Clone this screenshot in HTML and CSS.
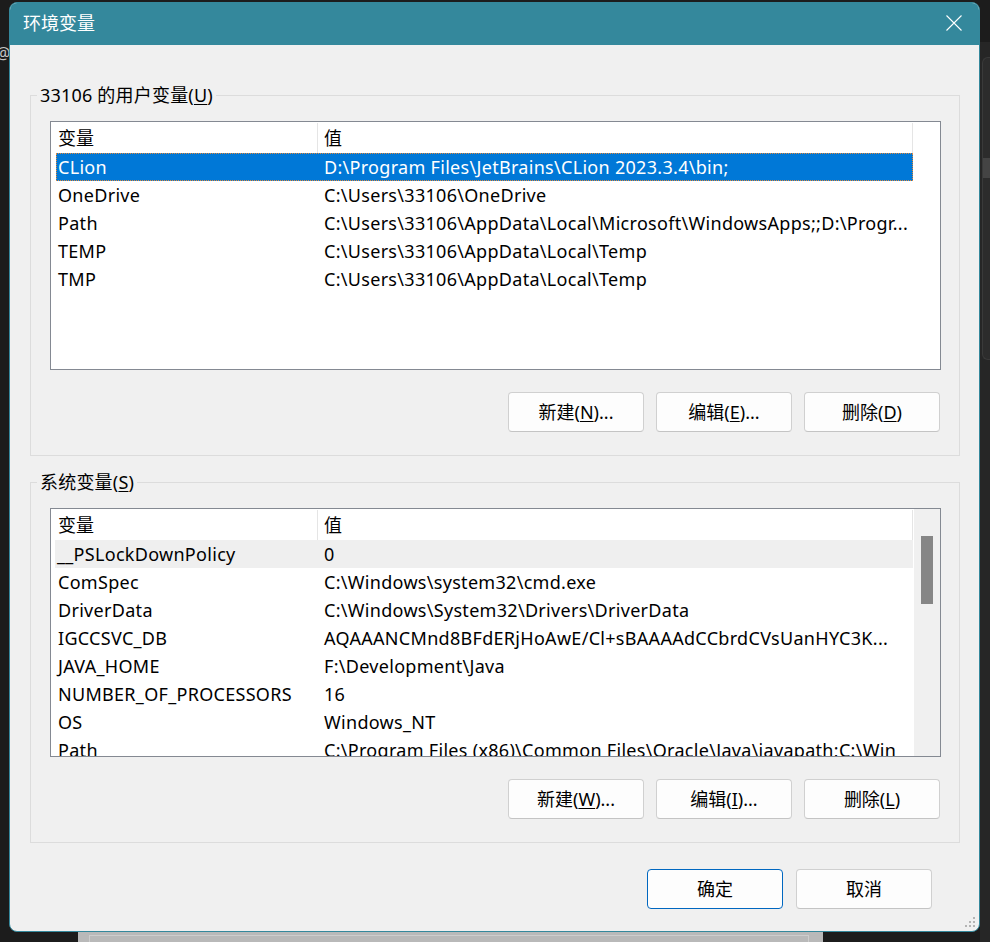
FILE: index.html
```html
<!DOCTYPE html>
<html lang="zh-CN">

<head>
    <meta charset="UTF-8">
    <meta name="viewport" content="width=device-width, initial-scale=1.0">
    <title>环境变量</title>
    <link rel="stylesheet" href="styles.css">
</head>

<body>
    <div class="desk">
        <!-- 后面的窗口 -->
        <div class="back_win">
            <div class="back_panel"></div>
        </div>
        <span class="desk_at">@</span>
        <div class="desk_side">
            <div class="side_panel">
                <div class="side_block"></div>
            </div>
        </div>

        <!-- 环境变量对话框 -->
        <div class="dialog">
            <div class="title_bar">
                <span class="title">环境变量</span>
                <svg class="btn_close" width="16" height="16" viewBox="0 0 16 16">
                    <path d="M0.5 0.5L15.5 15.5M15.5 0.5L0.5 15.5" stroke="#ffffff" stroke-width="1.1" fill="none" />
                </svg>
            </div>

            <div class="dialog_body">
                <!-- 用户变量 -->
                <fieldset class="group">
                    <legend>33106 的用户变量(<u>U</u>)</legend>
                    <div class="group_body">
                        <div class="list">
                            <div class="list_main">
                                <div class="list_head"><span>变量</span><span>值</span></div>
                                <div class="row selected"><span>CLion</span><span>D:\Program Files\JetBrains\CLion 2023.3.4\bin;</span></div>
                                <div class="row"><span>OneDrive</span><span>C:\Users\33106\OneDrive</span></div>
                                <div class="row"><span>Path</span><span>C:\Users\33106\AppData\Local\Microsoft\WindowsApps;;D:\Progr...</span></div>
                                <div class="row"><span>TEMP</span><span>C:\Users\33106\AppData\Local\Temp</span></div>
                                <div class="row"><span>TMP</span><span>C:\Users\33106\AppData\Local\Temp</span></div>
                            </div>
                        </div>
                        <div class="btn_row">
                            <span class="btn">新建(<u>N</u>)...</span>
                            <span class="btn">编辑(<u>E</u>)...</span>
                            <span class="btn">删除(<u>D</u>)</span>
                        </div>
                    </div>
                </fieldset>

                <!-- 系统变量 -->
                <fieldset class="group group_sys">
                    <legend>系统变量(<u>S</u>)</legend>
                    <div class="group_body">
                        <div class="list">
                            <div class="list_main">
                                <div class="list_head"><span>变量</span><span>值</span></div>
                                <div class="row hover"><span>__PSLockDownPolicy</span><span>0</span></div>
                                <div class="row"><span>ComSpec</span><span>C:\Windows\system32\cmd.exe</span></div>
                                <div class="row"><span>DriverData</span><span>C:\Windows\System32\Drivers\DriverData</span></div>
                                <div class="row"><span>IGCCSVC_DB</span><span>AQAAANCMnd8BFdERjHoAwE/Cl+sBAAAAdCCbrdCVsUanHYC3K...</span></div>
                                <div class="row"><span>JAVA_HOME</span><span>F:\Development\Java</span></div>
                                <div class="row"><span>NUMBER_OF_PROCESSORS</span><span>16</span></div>
                                <div class="row"><span>OS</span><span>Windows_NT</span></div>
                                <div class="row"><span>Path</span><span>C:\Program Files (x86)\Common Files\Oracle\Java\javapath;C:\Win</span></div>
                            </div>
                            <!-- 滚动条 -->
                            <div class="scroll">
                                <div class="scroll_thumb"></div>
                            </div>
                        </div>
                        <div class="btn_row">
                            <span class="btn">新建(<u>W</u>)...</span>
                            <span class="btn">编辑(<u>I</u>)...</span>
                            <span class="btn">删除(<u>L</u>)</span>
                        </div>
                    </div>
                </fieldset>

                <div class="dialog_foot">
                    <span class="btn btn_default">确定</span>
                    <span class="btn">取消</span>
                </div>
            </div>

            <!-- 右下角拖动点 -->
            <svg class="grip" width="12" height="12" viewBox="0 0 12 12">
                <g fill="#b4b4b4">
                    <rect x="9" y="0" width="2" height="2" />
                    <rect x="5" y="4" width="2" height="2" />
                    <rect x="9" y="4" width="2" height="2" />
                    <rect x="1" y="8" width="2" height="2" />
                    <rect x="5" y="8" width="2" height="2" />
                    <rect x="9" y="8" width="2" height="2" />
                </g>
            </svg>
        </div>
    </div>
</body>

</html>
```

FILE: styles.css
```css
/* 初始化 */

* {
    margin: 0;
    padding: 0;
    box-sizing: border-box;
}

body {
    background: #1c1c1c;
    font-family: "Noto Sans", "Noto Sans CJK SC", sans-serif;
    font-size: 18px;
    color: #000;
}

u {
    text-decoration-thickness: 1px;
    text-underline-offset: 2px;
}

.desk {
    width: 990px;
    height: 942px;
    position: relative;
    overflow: hidden;
    padding: 2px 0 0 9px;
}

/* 背景里的东西 */
.back_win {
    position: absolute;
    left: 78px;
    top: 932px;
    width: 745px;
    height: 20px;
    background: #b9b9b9;
}

.back_win .back_panel {
    position: absolute;
    left: 11px;
    right: 14px;
    top: 3px;
    height: 20px;
    border: 1px solid #cdcdcd;
}

.desk_at {
    position: absolute;
    left: -4px;
    top: 42px;
    color: #c4c4c4;
    font-size: 16px;
}

.desk_side {
    position: absolute;
    right: 0;
    top: 42px;
    width: 10px;
    height: 900px;
    background: #262626;
    padding: 15px 0 0 2px;
}

.desk_side .side_panel {
    height: 303px;
    background: #2c2c2c;
    border: 1px solid #3a3a3a;
    border-right: none;
    border-radius: 6px 0 0 6px;
    padding-top: 100px;
}

.desk_side .side_block {
    height: 20px;
    background: #444;
}

/* 对话框 */
.dialog {
    width: 971px;
    height: 930px;
    border: 1px solid #34889c;
    border-radius: 8px;
    background: #f0f0f0;
    position: relative;
    overflow: hidden;
}

.title_bar {
    height: 42px;
    background: #34889c;
    display: flex;
    align-items: center;
    justify-content: space-between;
    padding: 0 17px 2px 13px;
}

.title_bar .title {
    color: #fff;
    font-size: 18px;
    line-height: 24px;
}

.dialog_body {
    padding: 38px 20px 0 20px;
}

.group {
    width: 930px;
    border: 1px solid #dcdcdc;
    min-width: 0;
}

.group legend {
    margin-left: 6px;
    padding: 0 3px;
    line-height: 24px;
    letter-spacing: 0.2px;
}

.group_sys {
    margin-top: 14px;
}

.group_body {
    padding: 14px 18px 23px 19px;
}

/* 列表 */
.list {
    width: 891px;
    height: 249px;
    border: 1px solid #848992;
    background: #fff;
    display: flex;
    overflow: hidden;
}

.list_main {
    width: 862px;
    flex: none;
}

.list_head {
    height: 31px;
    display: grid;
    grid-template-columns: 267px 595px;
    line-height: 30px;
}

.list_head span {
    padding-left: 7px;
    border-right: 1px solid #e5e5e5;
    margin: 1px 0 1px;
}

.list_head span + span {
    padding-left: 6px;
}

.row {
    height: 28px;
    margin-left: 5px;
    display: grid;
    grid-template-columns: 261px 596px;
    line-height: 28px;
    white-space: nowrap;
    letter-spacing: 0.3px;
}

.row span {
    padding-left: 2px;
    overflow: hidden;
}

.row span + span {
    padding-left: 7px;
}

.row.selected {
    background: #0078d7;
    color: #fff;
    outline: 1px dotted #e3893a;
    outline-offset: -1px;
}

.row.hover {
    background: #efefef;
    margin-left: 4px;
    grid-template-columns: 262px 596px;
}

.scroll {
    width: 27px;
    flex: none;
    background: #f0f0f0;
    border-left: 1px solid #fff;
    padding: 27px 0 0 7px;
}

.scroll_thumb {
    width: 12px;
    height: 68px;
    background: #868686;
}

/* 按钮 */
.btn_row {
    margin-top: 22px;
    display: flex;
    justify-content: flex-end;
    gap: 12px;
    padding-right: 1px;
}

.btn {
    width: 136px;
    height: 40px;
    line-height: 38px;
    text-align: center;
    background: #fdfdfd;
    border: 1px solid #d0d0d0;
    border-bottom-color: #c4c4c4;
    border-radius: 4px;
}

.btn_default {
    border: 1px solid #0067c0;
}

.dialog_foot {
    margin-top: 26px;
    display: flex;
    justify-content: flex-end;
    gap: 13px;
    padding-right: 27px;
}

.grip {
    position: absolute;
    right: 3px;
    bottom: 2px;
}
```
